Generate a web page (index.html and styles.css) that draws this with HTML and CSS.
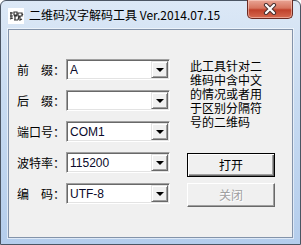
FILE: index.html
```html
<!DOCTYPE html>
<html lang="zh">
<head>
    <meta charset="utf-8">
    <title>二维码汉字解码工具</title>
    <link rel="stylesheet" href="styles.css">
</head>
<body>
    <div class="window">
        <div class="titlebar">
            <svg class="appicon" width="16" height="16" viewBox="0 0 16 16">
                <rect width="16" height="16" fill="#fff"/>
                <path d="M2 5h3M3 4v7M2 8h3M2 11l3-1M6 4h3v3H6zM6 8h3M7 8v4M6 12h4" stroke="#333" stroke-width="1.2" fill="none"/>
                <path d="M10 5h4v3h-4zM11 8l-1 4M12 8v4l2-1M14 6l1 1" stroke="#333" stroke-width="1.2" fill="none"/>
            </svg>
            <div class="title">二维码汉字解码工具 Ver.2014.07.15</div>
            <div class="closebtn">
                <svg width="14" height="12" viewBox="0 0 14 12">
                    <path d="M3 2l8 8M11 2l-8 8" stroke="#4a3030" stroke-width="4.2" stroke-linecap="round"/>
                    <path d="M3 2l8 8M11 2l-8 8" stroke="#fff" stroke-width="2.2" stroke-linecap="round"/>
                </svg>
            </div>
        </div>
        <div class="client">
            <div class="form">
                <div class="row">
                    <span class="label">前　缀：</span>
                    <div class="combo"><span class="value">A</span><span class="arrow"></span></div>
                </div>
                <div class="row">
                    <span class="label">后　缀：</span>
                    <div class="combo"><span class="value"></span><span class="arrow"></span></div>
                </div>
                <div class="row">
                    <span class="label">端口号：</span>
                    <div class="combo"><span class="value">COM1</span><span class="arrow"></span></div>
                </div>
                <div class="row">
                    <span class="label">波特率：</span>
                    <div class="combo"><span class="value">115200</span><span class="arrow"></span></div>
                </div>
                <div class="row">
                    <span class="label">编　码：</span>
                    <div class="combo"><span class="value">UTF-8</span><span class="arrow"></span></div>
                </div>
            </div>
            <div class="side">
                <p class="note">此工具针对二维码中含中文的情况或者用于区别分隔符号的二维码</p>
                <div class="btn default">打开</div>
                <div class="btn disabled">关闭</div>
            </div>
        </div>
    </div>
</body>
</html>
```

FILE: styles.css
```css
* {
    box-sizing: border-box;
}
html, body {
    margin: 0;
    background: #fff;
}
body {
    font-family: "Noto Sans CJK SC", "Liberation Sans", sans-serif;
    font-size: 12px;
    color: #000;
}
.window {
    width: 301px;
    height: 245px;
    border: 1px solid #4b5563;
    border-radius: 6px 6px 0 0;
    background: linear-gradient(180deg, #dce8f6 0%, #c8dbf1 40%, #b4cdec 100%);
    padding: 0 7px 6px 7px;
    display: flex;
    flex-direction: column;
}
.titlebar {
    height: 28px;
    display: flex;
    align-items: flex-start;
}
.appicon {
    margin: 7px 0 0 0;
    flex: none;
}
.title {
    margin: 6px 0 0 5px;
    line-height: 16px;
    white-space: nowrap;
}
.closebtn {
    margin-left: auto;
    width: 46px;
    height: 19px;
    margin-top: -1px;
    border: 1px solid #6b2a22;
    border-top: none;
    border-radius: 0 0 5px 5px;
    background: linear-gradient(180deg, #e9a595 0%, #d7755f 45%, #c0412b 55%, #d66a50 100%);
    box-shadow: inset 0 0 0 1px rgba(255, 220, 210, 0.5);
    display: flex;
    justify-content: center;
    align-items: center;
}
.client {
    flex: 1;
    border: 1px solid #8393aa;
    box-shadow: 0 0 0 1px rgba(255, 255, 255, 0.55);
    background: #f0f0f0;
    display: flex;
}
.form {
    padding: 29px 0 0 8px;
    display: flex;
    flex-direction: column;
    gap: 10px;
}
.row {
    display: flex;
    align-items: center;
    height: 21px;
}
.label {
    width: 49px;
    white-space: nowrap;
    line-height: 14px;
}
.combo {
    width: 104px;
    height: 21px;
    background: #fff;
    border-style: solid;
    border-width: 1px;
    border-color: #a0a0a0 #fff #fff #a0a0a0;
    box-shadow: inset 1px 1px 0 #696969, inset -1px -1px 0 #e3e3e3;
    display: flex;
    align-items: center;
    padding: 1px 1px 1px 3px;
}
.value {
    flex: 1;
    font-family: "Liberation Sans", sans-serif;
    font-size: 12px;
    line-height: 14px;
    color: #0a0a2a;
}
.arrow {
    width: 17px;
    height: 17px;
    background: #f0f0f0;
    border-style: solid;
    border-width: 1px;
    border-color: #e3e3e3 #696969 #696969 #e3e3e3;
    box-shadow: inset 1px 1px 0 #fff, inset -1px -1px 0 #a0a0a0;
    display: flex;
    justify-content: center;
    align-items: center;
}
.arrow::after {
    content: "";
    border-left: 4px solid transparent;
    border-right: 4px solid transparent;
    border-top: 4px solid #000;
    margin-top: 1px;
}
.side {
    margin-left: 17px;
    display: flex;
    flex-direction: column;
}
.note {
    margin: 29px 0 0 3px;
    width: 74px;
    line-height: 14px;
}
.btn {
    width: 88px;
    height: 24px;
    display: flex;
    justify-content: center;
    align-items: center;
    background: #f0f0f0;
    line-height: 14px;
}
.btn.default {
    margin-top: 24px;
    border: 1px solid #000;
    box-shadow: inset 1px 1px 0 #fff, inset -1px -1px 0 #696969, inset -2px -2px 0 #a0a0a0;
}
.btn.disabled {
    margin-top: 6px;
    color: #a0a0a0;
    border-style: solid;
    border-width: 1px;
    border-color: #fff #696969 #696969 #fff;
    box-shadow: inset -1px -1px 0 #a0a0a0;
    text-shadow: 1px 1px 0 #fff;
}
```
